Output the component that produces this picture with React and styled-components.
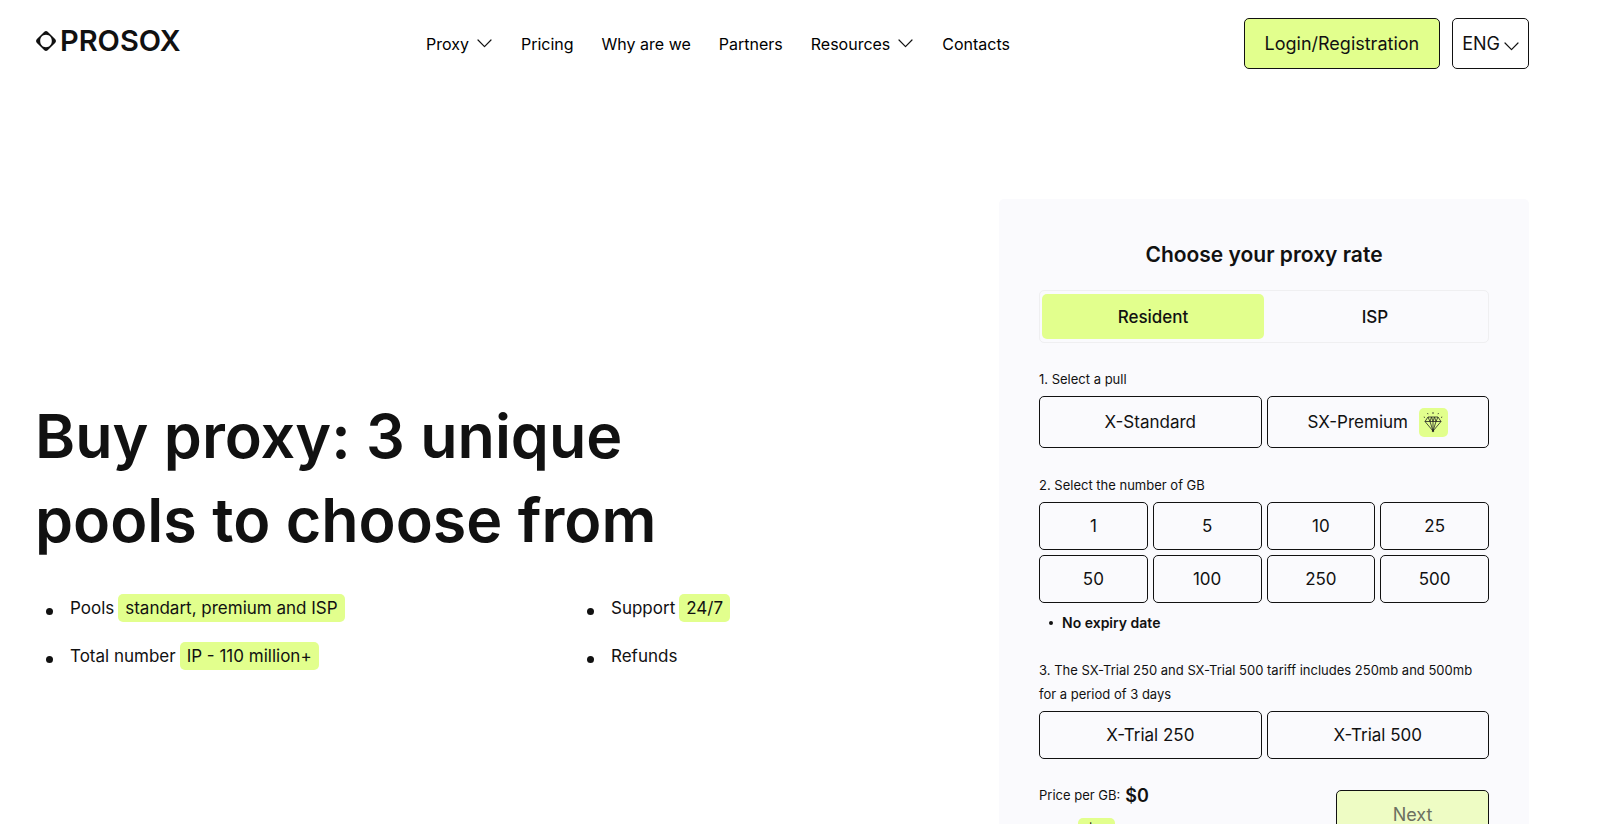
import React, { useState } from "react";
import styled, { createGlobalStyle } from "styled-components";

const ink = "#111111";
const lime = "#e2ff8d";

const GlobalStyle = createGlobalStyle`
  *, *::before, *::after { box-sizing: border-box; }
  body {
    margin: 0;
    background: #ffffff;
    color: ${ink};
    font-family: Inter, "Liberation Sans", sans-serif;
    font-size: 17px;
  }
  button { font: inherit; color: inherit; cursor: pointer; }
  h1, h2, p, ul { margin: 0; padding: 0; }
`;

const Page = styled.div`
  padding: 0 71px 40px 35px;
`;

const Header = styled.header`
  display: grid;
  grid-template-columns: 391px 1fr auto;
  align-items: center;
  padding-top: 18px;
`;

const Logo = styled.a`
  display: flex;
  align-items: center;
  gap: 3px;
  margin-bottom: 6px;
  color: ${ink};
  font-size: 29px;
  font-weight: 600;
  line-height: 32px;
  text-decoration: none;
`;

const Nav = styled.nav`
  display: flex;
  align-items: center;
  gap: 28px;
`;

const NavLink = styled.a`
  display: flex;
  align-items: center;
  gap: 8px;
  padding-right: ${(p) => (p.$menu ? 1 : 0)}px;
  color: #000000;
  font-size: 16px;
  font-weight: 400;
  line-height: 24px;
  white-space: nowrap;
  text-decoration: none;
`;

const HeaderActions = styled.div`
  display: flex;
  gap: 12px;
`;

const HeaderButton = styled.button`
  display: flex;
  align-items: center;
  justify-content: center;
  gap: 4px;
  height: 51px;
  padding: 0 ${(p) => (p.$wide ? 20 : 9)}px;
  border: 1px solid ${ink};
  border-radius: 5px;
  background: ${(p) => (p.$wide ? lime : "#ffffff")};
  font-size: 18px;
  white-space: nowrap;

  svg { margin-top: 5px; }
`;

const Main = styled.main`
  display: flex;
  justify-content: space-between;
  align-items: flex-start;
  padding-top: 130px;
`;

const Hero = styled.section`
  flex: 1;
  padding-top: 195px;
`;

const Headline = styled.h1`
  max-width: 660px;
  font-size: 61px;
  font-weight: 600;
  line-height: 84px;
`;

const Features = styled.ul`
  display: grid;
  grid-template-columns: 541px 1fr;
  row-gap: 20px;
  margin-top: 32px;
  list-style: none;
`;

const Feature = styled.li`
  display: flex;
  align-items: center;
  gap: 4px;
  height: 28px;
  padding-left: 11px;
  line-height: 28px;

  &::before {
    content: "";
    width: 7px;
    height: 7px;
    margin: 6px 13px 0 0;
    border-radius: 50%;
    background: ${ink};
  }
`;

const Highlight = styled.span`
  padding: 0 7px;
  border-radius: 5px;
  background: ${lime};
  line-height: 28px;
`;

const Card = styled.section`
  flex: 0 0 530px;
  padding: 40px;
  border-radius: 5px;
  background: #fafafd;
`;

const CardTitle = styled.h2`
  font-size: 21px;
  font-weight: 600;
  line-height: 32px;
  text-align: center;
`;

const Tabs = styled.div`
  display: grid;
  grid-template-columns: 1fr 1fr;
  margin-top: 19px;
  padding: 3px 2px;
  border: 1px solid #efeff1;
  border-radius: 5px;
`;

const Tab = styled.button`
  height: 45px;
  padding: 0;
  border: 0;
  border-radius: 5px;
  background: ${(p) => (p.$active ? lime : "transparent")};
  font-weight: 500;
`;

const StepLabel = styled.p`
  margin-top: ${(p) => p.$space}px;
  margin-bottom: 5px;
  font-size: 13px;
  font-weight: 400;
  line-height: 24px;
`;

const Options = styled.div`
  display: grid;
  grid-template-columns: repeat(${(p) => p.$columns}, 1fr);
  gap: 5px;
`;

const Option = styled.button`
  display: flex;
  align-items: center;
  justify-content: center;
  gap: 11px;
  height: ${(p) => (p.$tall ? 52 : 48)}px;
  padding: 0;
  border: 1px solid ${ink};
  border-radius: 5px;
  background: transparent;
`;

const GemBadge = styled.span`
  display: flex;
  align-items: center;
  justify-content: center;
  width: 29px;
  height: 29px;
  border-radius: 5px;
  background: ${lime};
`;

const Note = styled.p`
  display: flex;
  align-items: center;
  gap: 9px;
  margin-top: 8px;
  padding-left: 10px;
  font-size: 14px;
  font-weight: 600;
  line-height: 24px;

  &::before {
    content: "";
    width: 4px;
    height: 4px;
    border-radius: 50%;
    background: ${ink};
  }
`;

const Summary = styled.div`
  display: flex;
  justify-content: space-between;
  align-items: flex-start;
  margin-top: 22px;
`;

const Prices = styled.div`
  display: grid;
  gap: 9px;
`;

const Price = styled.p`
  display: flex;
  align-items: center;
  gap: 5px;
  height: 28px;
  font-size: 13px;

  strong { font-size: 18px; font-weight: 600; }
`;

const NextButton = styled.button`
  width: 153px;
  height: 48px;
  margin-top: 9px;
  border: 1px solid ${ink};
  border-radius: 5px;
  background: #eefcc4;
  color: #6c7060;
  font-size: 18px;
`;

const Chevron = () => (
  <svg width="15" height="9" viewBox="0 0 15 9" fill="none" aria-hidden="true">
    <path d="M1 1 7.5 7.6 14 1" stroke="#111" strokeWidth="1.2" strokeLinecap="round" strokeLinejoin="round" />
  </svg>
);

const LogoMark = () => (
  <svg width="22" height="22" viewBox="0 0 22 22" aria-hidden="true">
    <path
      fill="#111"
      fillRule="evenodd"
      d="M9.300 1.800Q11 .300 12.700 1.800L20.300 9.300Q21.800 11 20.300 12.700L12.700 20.200Q11 21.700 9.300 20.200L1.700 12.700Q.200 11 1.700 9.300ZM11 4.800C7.400 4.800 5.200 7.600 5.200 11S7.400 17.200 11 17.200 16.800 14.400 16.800 11 14.600 4.800 11 4.800Z"
    />
  </svg>
);

const Gem = () => (
  <svg width="20" height="22" viewBox="0 0 20 22" fill="none" stroke="#222" strokeWidth=".8" strokeLinejoin="round" aria-hidden="true">
    <path d="M5 6h10l3 4.500L10 20 2 10.500ZM2 10.500h16M5 6l2 4.500L10 20l3-9.500 2-4.500M7 10.500 8.500 6 10 10.500 11.500 6 13 10.500M10 10.500V20" />
    <path d="M10 1v2M4.500 2l.5 1.200M15.500 2l-.5 1.200M.800 6l1.200.500M19.200 6 18 6.500" />
    <circle cx="10" cy="20" r=".8" fill="#222" />
  </svg>
);

const navItems = [
  { label: "Proxy", menu: true },
  { label: "Pricing" },
  { label: "Why are we" },
  { label: "Partners" },
  { label: "Resources", menu: true },
  { label: "Contacts" },
];

const features = [
  { text: "Pools", mark: "standart, premium and ISP" },
  { text: "Support", mark: "24/7" },
  { text: "Total number", mark: "IP - 110 million+" },
  { text: "Refunds" },
];

const volumes = [1, 5, 10, 25, 50, 100, 250, 500];

export default function App() {
  const [type, setType] = useState("Resident");

  return (
    <>
      <GlobalStyle />
      <Page>
        <Header>
          <Logo href="#">
            <LogoMark />
            PROSOX
          </Logo>
          <Nav>
            {navItems.map((item) => (
              <NavLink href="#" key={item.label} $menu={item.menu}>
                {item.label}
                {item.menu && <Chevron />}
              </NavLink>
            ))}
          </Nav>
          <HeaderActions>
            <HeaderButton $wide>Login/Registration</HeaderButton>
            <HeaderButton>
              ENG
              <Chevron />
            </HeaderButton>
          </HeaderActions>
        </Header>
        <Main>
          <Hero>
            <Headline>Buy proxy: 3 unique pools to choose from</Headline>
            <Features>
              {features.map((f) => (
                <Feature key={f.text}>
                  {f.text}
                  {f.mark && <Highlight>{f.mark}</Highlight>}
                </Feature>
              ))}
            </Features>
          </Hero>
          <Card>
            <CardTitle>Choose your proxy rate</CardTitle>
            <Tabs role="tablist">
              {["Resident", "ISP"].map((t) => (
                <Tab key={t} role="tab" aria-selected={type === t} $active={type === t} onClick={() => setType(t)}>
                  {t}
                </Tab>
              ))}
            </Tabs>
            <StepLabel $space={24}>1. Select a pull</StepLabel>
            <Options $columns={2}>
              <Option $tall>X-Standard</Option>
              <Option $tall>
                SX-Premium
                <GemBadge>
                  <Gem />
                </GemBadge>
              </Option>
            </Options>
            <StepLabel $space={25}>2. Select the number of GB</StepLabel>
            <Options $columns={4}>
              {volumes.map((v) => (
                <Option key={v}>{v}</Option>
              ))}
            </Options>
            <Note>No expiry date</Note>
            <StepLabel $space={23}>
              3. The SX-Trial 250 and SX-Trial 500 tariff includes 250mb and 500mb for a period of 3 days
            </StepLabel>
            <Options $columns={2}>
              <Option>X-Trial 250</Option>
              <Option>X-Trial 500</Option>
            </Options>
            <Summary>
              <Prices>
                <Price>
                  Price per GB: <strong>$0</strong>
                </Price>
                <Price>
                  Total:
                  <Highlight as="strong">$0</Highlight>
                </Price>
              </Prices>
              <NextButton disabled>Next</NextButton>
            </Summary>
          </Card>
        </Main>
      </Page>
    </>
  );
}
